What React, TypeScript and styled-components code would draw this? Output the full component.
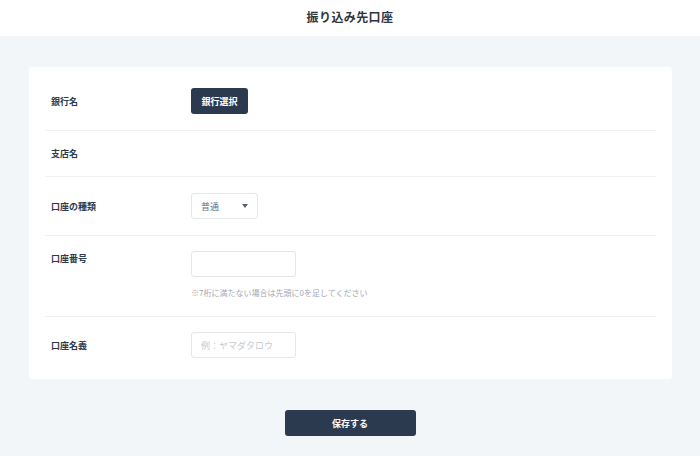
import styled, { createGlobalStyle } from "styled-components";

const GlobalStyle = createGlobalStyle`
    html, body {
        margin: 0;
        padding: 0;
        background: #f3f6f9;
    }
    body {
        font-family: "Noto Sans CJK JP", "Noto Sans", sans-serif;
        color: #2f3a4b;
    }
`;

const Page = styled.div`
    min-height: 456px;
    background-color: #f3f6f9;
`;

const Header = styled.header`
    height: 36px;
    background: #ffffff;
    display: flex;
    align-items: center;
    justify-content: center;
    padding-bottom: 4px;
    box-sizing: border-box;
`;

const Title = styled.h1`
    margin: 0;
    font-size: 12px;
    font-weight: 700;
    color: #2f3640;
    letter-spacing: 0.4px;
`;

const Card = styled.section`
    margin: 31px 28px 0 29px;
    background: #ffffff;
    border-radius: 3px;
    padding: 5px 16px 5px;
`;

const Row = styled.div<{ $top?: boolean; $last?: boolean }>`
    display: flex;
    align-items: ${(p) => (p.$top ? "flex-start" : "center")};
    padding: ${(p) => (p.$top ? "15px 0 17px" : p.$last ? "15px 0 16px" : "16px 0")};
    border-bottom: ${(p) => (p.$last ? "none" : "1px solid #eef1f4")};
`;

const Label = styled.div<{ $offset?: number }>`
    width: 140px;
    padding-left: 6px;
    flex-shrink: 0;
    font-size: 9px;
    font-weight: 700;
    line-height: 13px;
    color: #2f3a4b;
    margin-top: ${(p) => p.$offset ?? 0}px;
`;

const Field = styled.div`
    display: flex;
    flex-direction: column;
`;

const DarkButton = styled.button<{ $width: number }>`
    width: ${(p) => p.$width}px;
    height: 26px;
    border: none;
    border-radius: 3px;
    background: #2c3a50;
    color: #ffffff;
    font-family: inherit;
    font-size: 9px;
    font-weight: 700;
    padding: 0;
    cursor: pointer;
`;

const Select = styled.div`
    width: 67px;
    height: 26px;
    box-sizing: border-box;
    border: 1px solid #e3e7ec;
    border-radius: 3px;
    display: flex;
    align-items: center;
    justify-content: space-between;
    padding: 0 9px 0 9px;
    font-size: 9px;
    color: #6b7280;
`;

const Caret = styled.span`
    width: 0;
    height: 0;
    border-left: 3.5px solid transparent;
    border-right: 3.5px solid transparent;
    border-top: 4.5px solid #56627a;
`;

const Input = styled.input`
    width: 105px;
    height: 26px;
    box-sizing: border-box;
    border: 1px solid #e3e7ec;
    border-radius: 3px;
    padding: 0 9px;
    font-family: inherit;
    font-size: 9px;
    color: #2f3a4b;
    outline: none;

    &::placeholder {
        color: #c6cad1;
    }
`;

const Hint = styled.p`
    margin: 10px 0 0;
    font-size: 8px;
    line-height: 12px;
    color: #a3a9b3;
`;

const Footer = styled.div`
    display: flex;
    justify-content: center;
    padding: 31px 0 19px;
`;

const App = () => {
    return (
        <Page>
            <GlobalStyle />
            <Header>
                <Title>振り込み先口座</Title>
            </Header>
            <Card>
                <Row>
                    <Label>銀行名</Label>
                    <DarkButton $width={57}>銀行選択</DarkButton>
                </Row>
                <Row>
                    <Label>支店名</Label>
                </Row>
                <Row>
                    <Label>口座の種類</Label>
                    <Select>
                        <span>普通</span>
                        <Caret />
                    </Select>
                </Row>
                <Row $top>
                    <Label $offset={1}>口座番号</Label>
                    <Field>
                        <Input type="text" />
                        <Hint>※7桁に満たない場合は先頭に0を足してください</Hint>
                    </Field>
                </Row>
                <Row $last>
                    <Label>口座名義</Label>
                    <Input type="text" placeholder="例：ヤマダタロウ" />
                </Row>
            </Card>
            <Footer>
                <DarkButton $width={131}>保存する</DarkButton>
            </Footer>
        </Page>
    );
};

export default App;
